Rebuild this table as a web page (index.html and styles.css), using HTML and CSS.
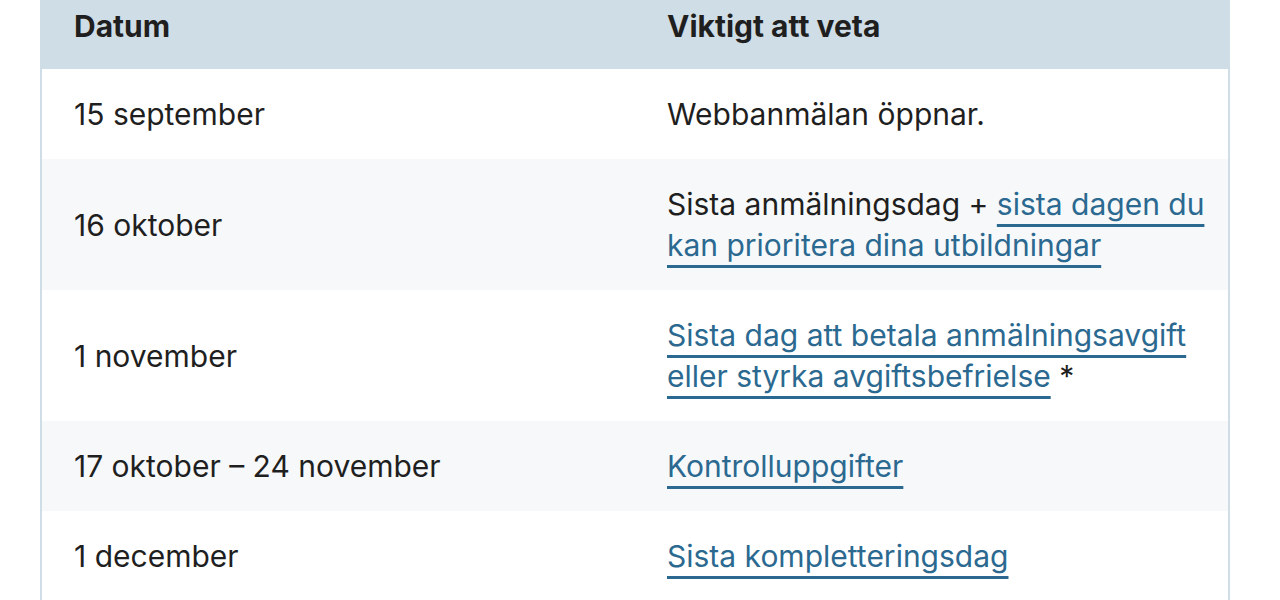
FILE: index.html
```html
<!DOCTYPE html>
<html lang="sv">
<head>
<meta charset="utf-8">
<link rel="stylesheet" href="styles.css">
</head>
<body>
<div class="page">
  <table class="dates">
    <thead>
      <tr>
        <th>Datum</th>
        <th>Viktigt att veta</th>
      </tr>
    </thead>
    <tbody>
      <tr>
        <td>15 september</td>
        <td>Webbanmälan öppnar.</td>
      </tr>
      <tr class="alt">
        <td>16 oktober</td>
        <td>Sista anmälningsdag + <a href="#">sista dagen du kan prioritera dina utbildningar</a></td>
      </tr>
      <tr>
        <td>1 november</td>
        <td><a href="#">Sista dag att betala anmälningsavgift eller styrka avgiftsbefrielse</a> *</td>
      </tr>
      <tr class="alt">
        <td>17 oktober – 24 november</td>
        <td><a href="#">Kontrolluppgifter</a></td>
      </tr>
      <tr>
        <td>1 december</td>
        <td><a href="#">Sista kompletteringsdag</a></td>
      </tr>
    </tbody>
  </table>
</div>
</body>
</html>
```
FILE: styles.css
```css
html, body {
  margin: 0;
  padding: 0;
  background: #ffffff;
}

.page {
  padding-left: 40px;
}

.dates {
  width: 1190px;
  table-layout: fixed;
  border-collapse: separate;
  border-spacing: 0;
  border-left: 2px solid #cfdde6;
  border-right: 2px solid #cfdde6;
  font-family: Inter, "Noto Sans", sans-serif;
  font-size: 30px;
  line-height: 41px;
  color: #1f1f1f;
  text-align: left;
}

.dates th {
  width: 50%;
  background: #cfdde6;
  font-weight: 700;
  padding: 6px 32px 22px 32px;
  vertical-align: middle;
}

.dates td {
  width: 50%;
  padding: 25px 32px 24px 32px;
  vertical-align: middle;
}

.dates td + td {
  padding-right: 16px;
}

.dates tr.alt td {
  background: #f6f8fa;
}

.dates a {
  color: #2b6990;
  text-decoration: underline;
  text-decoration-thickness: 3px;
  text-underline-offset: 9px;
}
```
